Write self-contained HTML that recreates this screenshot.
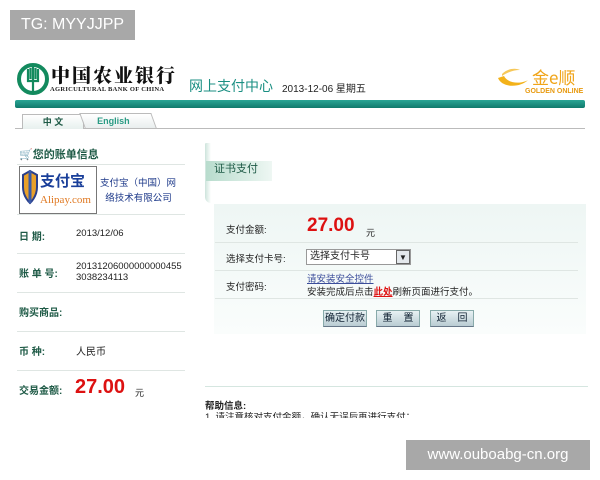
<!DOCTYPE html>
<html><head><meta charset="utf-8"><style>
*{margin:0;padding:0;box-sizing:border-box}
body{width:600px;height:480px;background:#fff;position:relative;overflow:hidden;font-family:"Liberation Sans","Noto Sans CJK SC",sans-serif;color:#222}
.a{position:absolute;white-space:nowrap}
.hl{position:absolute;height:1px;background:#dfe6e3}
.lbl{font-size:10px;font-weight:bold;color:#1e5a46}
.btn{position:absolute;top:310px;height:17px;font-size:10px;background:linear-gradient(#e8f1f3,#b9ccd3);border:1px solid #8aa;border-bottom-color:#678;text-align:center;line-height:15px;color:#123}
</style></head><body>
<div class="a" style="left:10px;top:10px;width:125px;height:30px;background:#a8a8a8;color:#fff;font-size:16px;line-height:30px;text-align:center">TG: MYYJJPP</div>

<svg class="a" style="left:17px;top:63px" width="32" height="32" viewBox="0 0 32 32">
<circle cx="16" cy="16" r="14" fill="none" stroke="#138a5e" stroke-width="4"/>
<path d="M11 6v12h10V6M13.5 5v11M18.5 5v11M16 3v26" stroke="#138a5e" stroke-width="2.2" fill="none"/>
</svg>
<div class="a" style="left:51px;top:61px;font-size:19px;font-weight:900;color:#111;font-family:'Noto Serif CJK SC',serif;letter-spacing:2px">中国农业银行</div>
<div class="a" style="left:50px;top:86px;font-size:6.5px;font-weight:bold;font-family:'Liberation Serif',serif;letter-spacing:0.3px">AGRICULTURAL BANK OF CHINA</div>
<div class="a" style="left:189px;top:76px;font-size:14px;color:#1b8f83">网上支付中心</div>
<div class="a" style="left:282px;top:80px;font-size:10px;color:#222">2013-12-06 星期五</div>
<svg class="a" style="left:494px;top:64px" width="92" height="32">
<path d="M4 14c4 10 22 10 30 2-6 4-20 4-24-4z" fill="#f3b21a"/>
<path d="M8 10c6-6 14-6 18-4-6 0-12 2-18 6z" fill="#f6c85a"/>
<text x="38" y="20" font-size="17" fill="#f0a418" font-family="Noto Sans CJK SC">金e顺</text>
<text x="31" y="29" font-size="7" fill="#e89a10" font-weight="bold">GOLDEN ONLINE</text>
</svg>
<div class="a" style="left:15px;top:100px;width:570px;height:8px;background:linear-gradient(#2aa595,#107a6c);border-radius:2px"></div>
<div class="a" style="left:15px;top:128px;width:570px;height:1px;background:#bbb"></div>
<div class="a" style="left:22px;top:114px;width:62px;height:15px;background:linear-gradient(#fff,#e7f0ee);border:1px solid #bbb;border-bottom:none;font-size:9px;font-weight:bold;color:#1e5a46;text-align:center;line-height:15px">中 文</div>
<div class="a" style="left:82px;top:113px;width:72px;height:15px;background:linear-gradient(#fff,#e9eeee);border:1px solid #bbb;border-bottom:none;font-size:9px;color:#2a9b84;font-weight:bold;padding-left:14px;line-height:14px;transform:skewX(20deg)"><span style="display:inline-block;transform:skewX(-20deg)">English</span></div>

<div class="a" style="left:19px;top:146px;font-size:11px;font-weight:bold;color:#1e5a46"><span style="color:#d9a530">🛒</span>您的账单信息</div>
<div class="hl" style="left:17px;top:164px;width:168px"></div>
<div class="a" style="left:19px;top:166px;width:78px;height:48px;border:1px solid #777;background:#fff"></div>
<svg class="a" style="left:21px;top:169px" width="18" height="40"><path d="M2 6l7-4 7 4v12c0 10-7 16-7 16s-7-6-7-16z" fill="#e8a02a" stroke="#2a3f8a" stroke-width="2"/><path d="M9 2v32" stroke="#3a5aa8" stroke-width="3"/></svg>
<div class="a" style="left:40px;top:170px;font-size:15px;font-weight:bold;color:#1a3f9a">支付宝</div>
<div class="a" style="left:40px;top:194px;font-size:11px;color:#e07820;font-family:'Liberation Serif',serif">Alipay.com</div>
<div class="a" style="left:100px;top:176px;font-size:9.5px;color:#1e3a8a;line-height:15px">支付宝（中国）网<br>&nbsp;&nbsp;络技术有限公司</div>
<div class="hl" style="left:17px;top:214px;width:168px"></div>
<div class="a lbl" style="left:19px;top:228px">日 期:</div>
<div class="a" style="left:76px;top:228px;font-size:9.5px">2013/12/06</div>
<div class="hl" style="left:17px;top:253px;width:168px"></div>
<div class="a lbl" style="left:19px;top:265px">账 单 号:</div>
<div class="a" style="left:76px;top:261px;font-size:9.5px;line-height:11px">20131206000000000455<br>3038234113</div>
<div class="hl" style="left:17px;top:292px;width:168px"></div>
<div class="a lbl" style="left:19px;top:304px">购买商品:</div>
<div class="hl" style="left:17px;top:331px;width:168px"></div>
<div class="a lbl" style="left:19px;top:343px">币 种:</div>
<div class="a" style="left:76px;top:343px;font-size:10px">人民币</div>
<div class="hl" style="left:17px;top:370px;width:168px"></div>
<div class="a lbl" style="left:19px;top:382px">交易金额:</div>
<div class="a" style="left:75px;top:376px;font-size:20px;font-weight:bold;color:#d11">27.00</div>
<div class="a" style="left:135px;top:386px;font-size:9px">元</div>

<div class="a" style="left:205px;top:143px;width:6px;height:60px;background:linear-gradient(90deg,#cde4dc,#fff);border-radius:4px 0 0 20px"></div>
<div class="a" style="left:206px;top:161px;width:66px;height:20px;background:linear-gradient(90deg,#b8dccd,#eef7f3);font-size:11px;color:#1e5a46;padding-left:8px;line-height:17px">证书支付</div>
<div class="a" style="left:214px;top:204px;width:372px;height:130px;background:linear-gradient(#eef6f4,#fafdfc)"></div>
<div class="a" style="left:226px;top:222px;font-size:9.5px">支付金额:</div>
<div class="a" style="left:307px;top:215px;font-size:19px;font-weight:bold;color:#d11">27.00</div>
<div class="a" style="left:366px;top:226px;font-size:9px">元</div>
<div class="hl" style="left:215px;top:242px;width:363px"></div>
<div class="a" style="left:226px;top:251px;font-size:9.5px">选择支付卡号:</div>
<div class="a" style="left:306px;top:249px;width:105px;height:16px;border:1px solid #999;background:#fff;font-size:10px;line-height:14px;padding-left:3px">选择支付卡号</div>
<div class="a" style="left:396px;top:250px;width:14px;height:14px;border:1px solid #666;background:#e4e8ec;font-size:8px;text-align:center;line-height:13px">▼</div>
<div class="hl" style="left:215px;top:270px;width:363px"></div>
<div class="a" style="left:226px;top:279px;font-size:9.5px">支付密码:</div>
<div class="a" style="left:307px;top:271px;font-size:9.5px;color:#3b4d9a;text-decoration:underline">请安装安全控件</div>
<div class="a" style="left:307px;top:284px;font-size:9.5px">安装完成后点击<b style="color:#d11;text-decoration:underline">此处</b>刷新页面进行支付。</div>
<div class="hl" style="left:215px;top:298px;width:363px"></div>
<div class="btn" style="left:323px;width:44px">确定付款</div>
<div class="btn" style="left:376px;width:44px">重&nbsp;&nbsp;&nbsp;&nbsp;置</div>
<div class="btn" style="left:430px;width:44px">返&nbsp;&nbsp;&nbsp;&nbsp;回</div>
<div class="hl" style="left:205px;top:386px;width:383px;background:#d5e6e0"></div>
<div class="a" style="left:205px;top:398px;font-size:9.5px;font-weight:bold">帮助信息:</div>
<div class="a" style="left:205px;top:412px;font-size:9.5px;height:6px;overflow:hidden;line-height:11px">1. 请注意核对支付金额，确认无误后再进行支付；</div>

<div class="a" style="left:406px;top:440px;width:184px;height:30px;background:#a8a8a8;color:#fff;font-size:15px;line-height:30px;text-align:center">www.ouboabg-cn.org</div>
</body></html>
